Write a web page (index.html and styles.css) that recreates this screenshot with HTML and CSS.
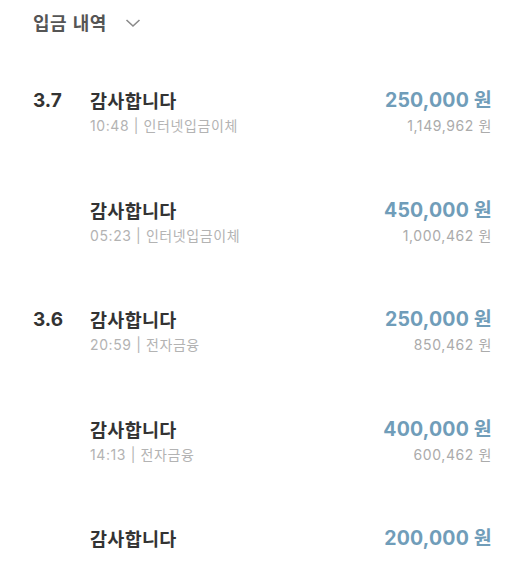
FILE: index.html
```html
<!DOCTYPE html>
<html lang="ko">
<head>
<meta charset="utf-8">
<link rel="stylesheet" href="styles.css">
</head>
<body>
<div class="page">
  <div class="header">
    <span class="header-title">입금 내역</span>
    <svg class="chev" width="16" height="10" viewBox="0 0 16 10"><path d="M1.5 2 L8 8 L14.5 2" fill="none" stroke="#8a8a8a" stroke-width="1.6"/></svg>
  </div>
  <div class="list">
    <div class="row">
      <div class="date">3.7</div>
      <div class="info"><div class="title">감사합니다</div><div class="sub">10:48 | 인터넷입금이체</div></div>
      <div class="money"><div class="amount">250,000 원</div><div class="bal">1,149,962 원</div></div>
    </div>
    <div class="row">
      <div class="date"></div>
      <div class="info"><div class="title">감사합니다</div><div class="sub">05:23 | 인터넷입금이체</div></div>
      <div class="money"><div class="amount">450,000 원</div><div class="bal">1,000,462 원</div></div>
    </div>
    <div class="row">
      <div class="date">3.6</div>
      <div class="info"><div class="title">감사합니다</div><div class="sub">20:59 | 전자금융</div></div>
      <div class="money"><div class="amount">250,000 원</div><div class="bal">850,462 원</div></div>
    </div>
    <div class="row">
      <div class="date"></div>
      <div class="info"><div class="title">감사합니다</div><div class="sub">14:13 | 전자금융</div></div>
      <div class="money"><div class="amount">400,000 원</div><div class="bal">600,462 원</div></div>
    </div>
    <div class="row">
      <div class="date"></div>
      <div class="info"><div class="title">감사합니다</div><div class="sub">&nbsp;</div></div>
      <div class="money"><div class="amount">200,000 원</div><div class="bal">&nbsp;</div></div>
    </div>
  </div>
</div>
</body>
</html>
```

FILE: styles.css
```css
* { box-sizing: border-box; }
html, body { margin: 0; padding: 0; background: #fff; }
body {
  font-family: Inter, "Noto Sans CJK KR", sans-serif;
  color: #333;
  overflow: hidden;
}
.page {
  width: 513px;
  height: 565px;
  padding: 10px 21px 0 33px;
}
.header {
  display: flex;
  align-items: center;
  gap: 18px;
  height: 24px;
}
.header-title {
  font-family: "Noto Sans CJK KR", sans-serif;
  font-size: 18px;
  font-weight: 700;
  color: #555;
  letter-spacing: 0.5px;
}
.chev { margin-top: 1px; }
.list {
  margin-top: 54px;
  display: flex;
  flex-direction: column;
  gap: 62.5px;
}
.row {
  display: flex;
  align-items: flex-start;
  height: 47px;
}
.date {
  width: 57px;
  font-size: 19px;
  font-weight: 700;
  line-height: 24px;
  color: #333;
  padding-top: 1px;
}
.info { flex: 1; }
.title {
  font-family: "Noto Sans CJK KR", sans-serif;
  font-size: 18.5px;
  font-weight: 700;
  line-height: 24px;
  color: #333;
  letter-spacing: 0.3px;
}
.sub {
  margin-top: 5px;
  font-size: 14px;
  line-height: 18px;
  color: #b3b3b3;
  letter-spacing: 0.6px;
}
.money { text-align: right; }
.amount {
  font-size: 19.5px;
  font-weight: 700;
  line-height: 24px;
  color: #709db9;
  letter-spacing: 0.2px;
}
.bal {
  margin-top: 5px;
  font-size: 14px;
  line-height: 18px;
  color: #ababab;
  letter-spacing: 0.6px;
}
```
